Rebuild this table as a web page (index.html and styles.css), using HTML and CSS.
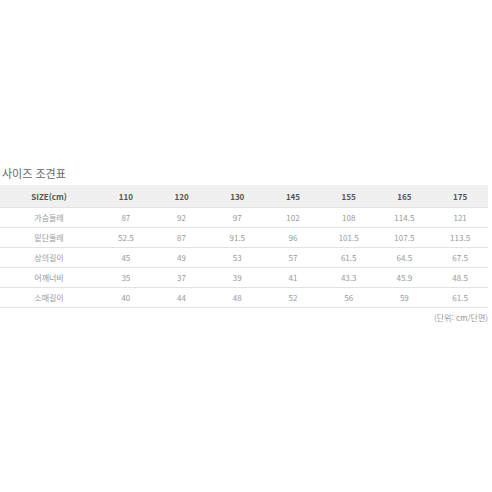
FILE: index.html
```html
<!DOCTYPE html>
<html lang="ko">
<head>
<meta charset="utf-8">
<link rel="stylesheet" href="styles.css">
</head>
<body>
<div class="page">
  <h2 class="title">사이즈 조견표</h2>
  <table class="size-table">
    <colgroup>
      <col class="c-first"><col><col><col><col><col><col><col>
    </colgroup>
    <thead>
      <tr><th>SIZE(cm)</th><th>110</th><th>120</th><th>130</th><th>145</th><th>155</th><th>165</th><th>175</th></tr>
    </thead>
    <tbody>
      <tr><td>가슴둘레</td><td>87</td><td>92</td><td>97</td><td>102</td><td>108</td><td>114.5</td><td>121</td></tr>
      <tr><td>밑단둘레</td><td>52.5</td><td>87</td><td>91.5</td><td>96</td><td>101.5</td><td>107.5</td><td>113.5</td></tr>
      <tr><td>상의길이</td><td>45</td><td>49</td><td>53</td><td>57</td><td>61.5</td><td>64.5</td><td>67.5</td></tr>
      <tr><td>어깨너비</td><td>35</td><td>37</td><td>39</td><td>41</td><td>43.3</td><td>45.9</td><td>48.5</td></tr>
      <tr><td>소매길이</td><td>40</td><td>44</td><td>48</td><td>52</td><td>56</td><td>59</td><td>61.5</td></tr>
    </tbody>
  </table>
  <p class="note">(단위: cm/단면)</p>
</div>
</body>
</html>
```
FILE: styles.css
```css
html, body {
  margin: 0;
  padding: 0;
  background: #ffffff;
}
body {
  font-family: "Noto Sans CJK KR", "Noto Sans", sans-serif;
}
.page {
  width: 488px;
  padding-top: 166px;
}
.title {
  margin: 0 0 5px 2px;
  font-size: 11px;
  line-height: 14px;
  font-weight: 400;
  color: #666666;
}
.size-table {
  width: 488px;
  border-collapse: collapse;
  table-layout: fixed;
}
.c-first {
  width: 98px;
}
.size-table th {
  height: 22px;
  padding: 0;
  background: #f0f0f0;
  font-size: 8px;
  font-weight: 700;
  color: #555555;
  text-align: center;
  border-bottom: 1px solid #e2e2e2;
}
.size-table td {
  height: 19px;
  padding: 0;
  font-size: 8px;
  font-weight: 400;
  color: #999999;
  text-align: center;
  border-bottom: 1px solid #e2e2e2;
}
.note {
  margin: 4px 0 0 0;
  text-align: right;
  font-size: 8px;
  line-height: 12px;
  color: #999999;
}
```
